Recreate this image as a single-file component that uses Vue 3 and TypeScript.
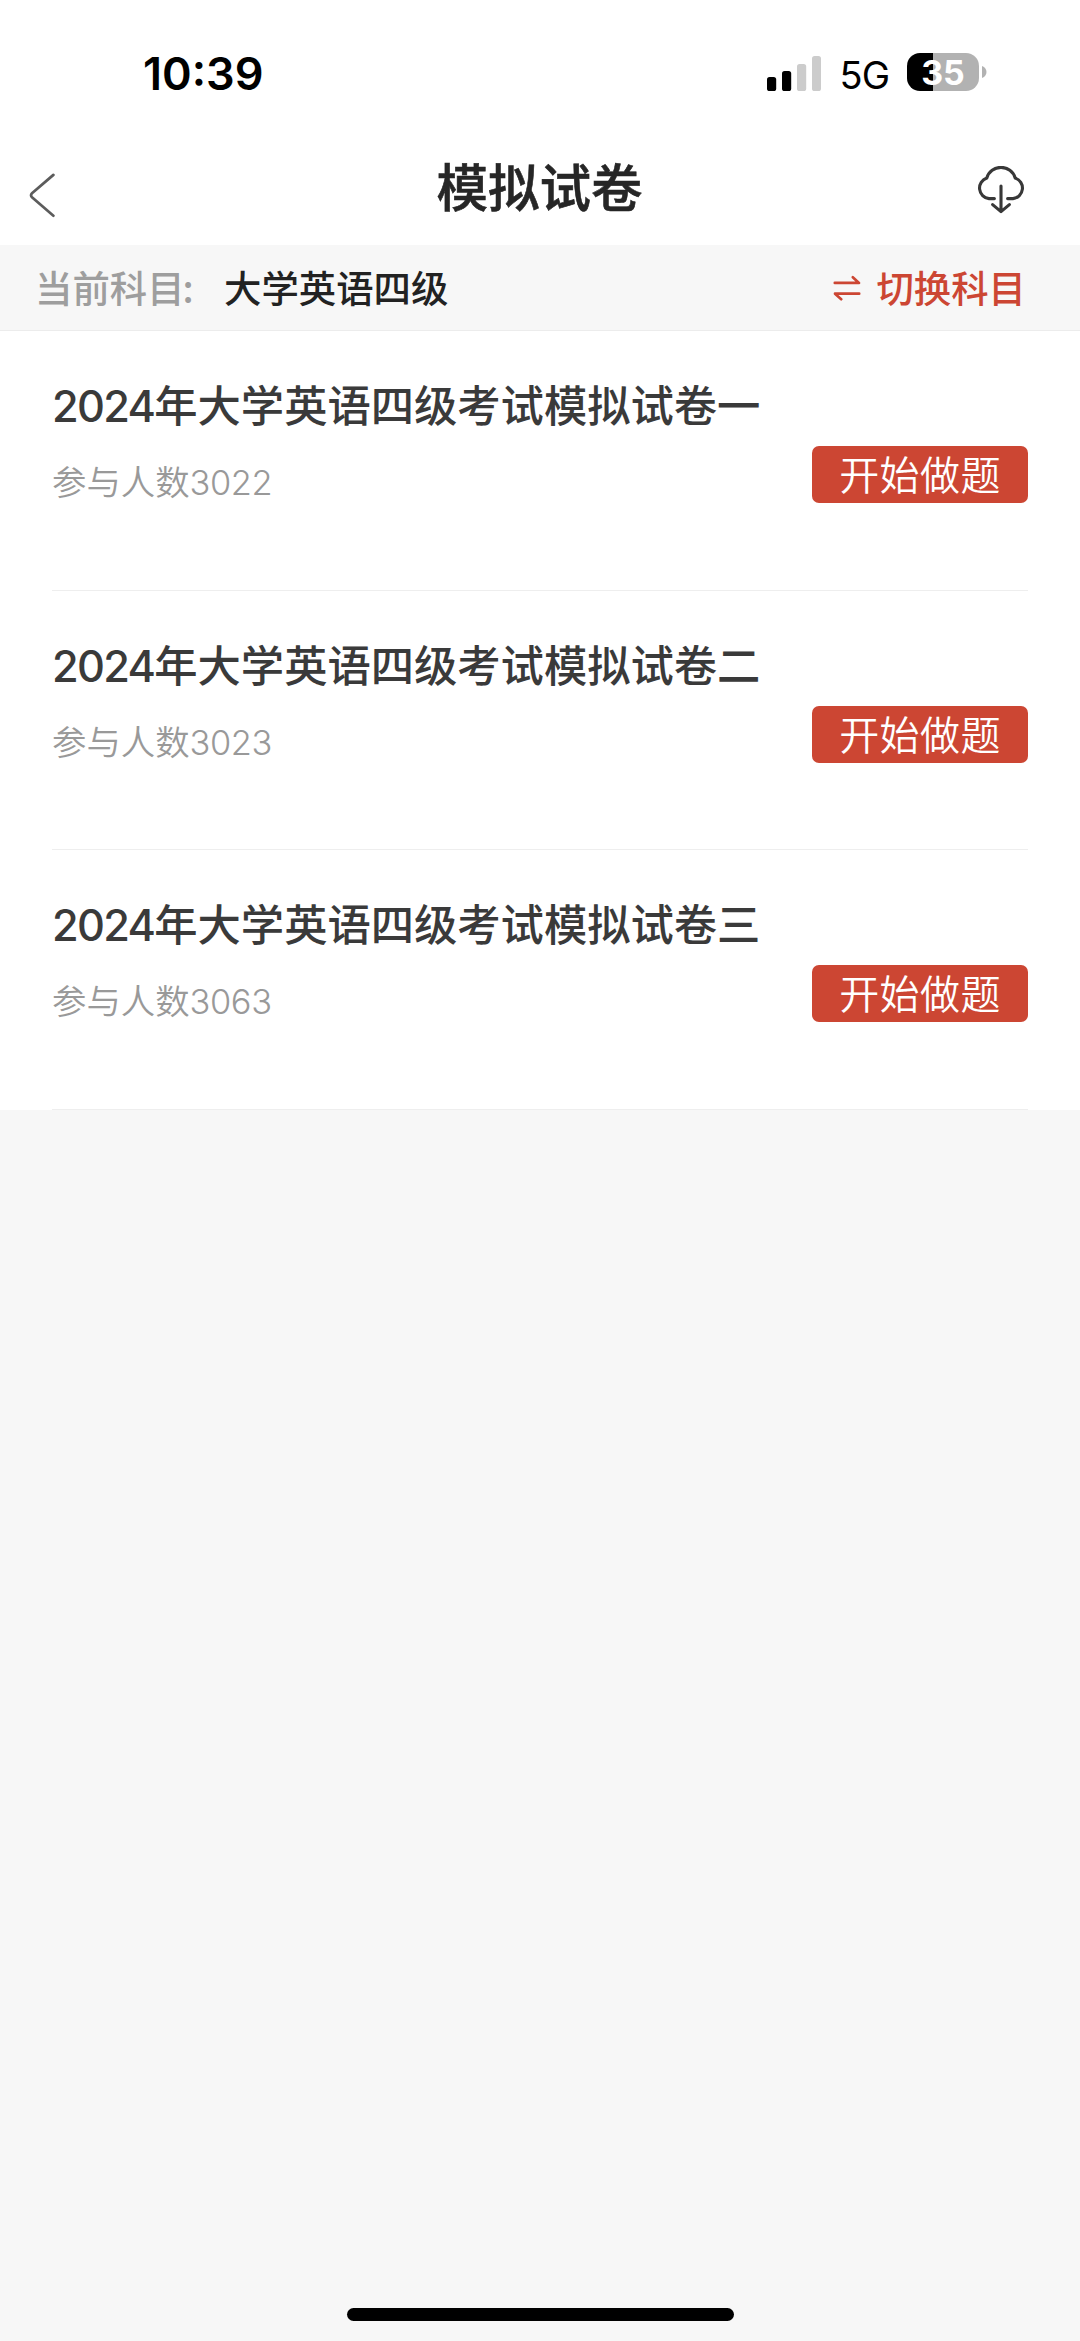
<script setup lang="ts">
interface Paper {
  year: string
  name: string
  count: number
}

const papers: Paper[] = [
  { year: '2024', name: '年大学英语四级考试模拟试卷一', count: 3022 },
  { year: '2024', name: '年大学英语四级考试模拟试卷二', count: 3023 },
  { year: '2024', name: '年大学英语四级考试模拟试卷三', count: 3063 },
]
</script>

<template>
  <div class="screen">
    <div class="status">
      <span class="time">10:39</span>
      <div class="indicators">
        <svg class="signal" width="54" height="36" viewBox="0 0 54 36">
          <rect x="0" y="21" width="9.2" height="14" rx="2.6" fill="#000" />
          <rect x="15" y="15" width="9.2" height="20" rx="2.6" fill="#000" />
          <rect x="30" y="8" width="9.2" height="27" rx="2.6" fill="#ccc" />
          <rect x="45" y="0" width="9" height="35" rx="2.6" fill="#ccc" />
        </svg>
        <span class="network">5G</span>
        <div class="battery">
          <span class="level">35</span>
          <svg class="nub" width="5" height="12" viewBox="0 0 5 12">
            <path d="M0 0C6 2 6 10 0 12Z" fill="#b2b2b2" />
          </svg>
        </div>
      </div>
    </div>

    <header class="nav">
      <svg class="back" width="26" height="46" viewBox="0 0 26 46">
        <path d="M24.4 2.9L3 21.2Q1 23.2 3 25.2L24.4 43.7" fill="none" stroke="#5c5c5c" stroke-width="2.7" stroke-linecap="round" />
      </svg>
      <h1 class="title">模拟试卷</h1>
      <svg class="cloud" width="50" height="48" viewBox="0 0 50 48">
        <g fill="none" stroke="#383838" stroke-width="3.1" stroke-linecap="round" stroke-linejoin="round">
          <path d="M18.4 32.6H13A10.6 10.6 0 0 1 10.8 12A14.8 14.8 0 0 1 39.2 12A10.6 10.6 0 0 1 37 32.6H31.6" />
          <path d="M25 20V45.6M16.6 38.6L25 45.6L33.4 38.6" />
        </g>
      </svg>
    </header>

    <div class="subject">
      <span class="label">当前科目<span class="colon">:</span></span>
      <span class="current">大学英语四级</span>
      <div class="switch">
        <svg width="28" height="26" viewBox="0 0 28 26">
          <g fill="none" stroke="#cc4633" stroke-width="2.7" stroke-linecap="round" stroke-linejoin="round">
            <path d="M1.8 7.9H26L19.8 2.2" />
            <path d="M26.2 18.7H2L8.2 24.2" />
          </g>
        </svg>
        <span>切换科目</span>
      </div>
    </div>

    <main class="list">
      <article v-for="paper in papers" :key="paper.name" class="item">
        <div class="info">
          <h2 class="name"><span class="num">{{ paper.year }}</span>{{ paper.name }}</h2>
          <p class="count">参与人数<span class="num">{{ paper.count }}</span></p>
        </div>
        <button class="start">开始做题</button>
      </article>
    </main>

    <div class="home"></div>
  </div>
</template>

<style>
body {
  margin: 0;
  background: #f7f7f7;
}
</style>

<style scoped>
.screen {
  display: flex;
  flex-direction: column;
  width: 1080px;
  height: 2341px;
  background: #f7f7f7;
  font-family: "Noto Sans CJK SC", sans-serif;
}
.status {
  display: flex;
  justify-content: space-between;
  box-sizing: border-box;
  height: 130px;
  padding: 44px 93px 0 143px;
  background: #fff;
  color: #000;
  font-family: Inter, sans-serif;
}
.time {
  height: 60px;
  font-size: 45px;
  font-weight: 600;
  line-height: 60px;
}
.indicators {
  display: flex;
  align-items: center;
  height: 58px;
}
.network {
  margin: 3px 0 0 19px;
  font-size: 38px;
  line-height: 50px;
  letter-spacing: -1px;
}
.battery {
  display: flex;
  align-items: center;
  gap: 3px;
  margin: -2px 0 0 18px;
}
.level {
  width: 72px;
  height: 38px;
  border-radius: 13px;
  background: linear-gradient(90deg, #000 26px, #b2b2b2 26px);
  color: #fff;
  font-size: 34px;
  font-weight: 700;
  line-height: 39px;
  text-align: center;
}
.signal {
  margin-top: 1px;
}
.nav {
  display: flex;
  justify-content: space-between;
  box-sizing: border-box;
  height: 115px;
  padding: 0 54px 0 29px;
  background: #fff;
}
.back {
  margin-top: 42px;
}
.title {
  margin: 17px 0 0 48px;
  height: 76px;
  color: #262626;
  font-size: 51.5px;
  font-weight: 500;
  line-height: 76px;
  -webkit-text-stroke: 0.6px #262626;
}
.cloud {
  margin-top: 36px;
}
.subject {
  display: flex;
  box-sizing: border-box;
  height: 86px;
  padding: 0 54px 0 35px;
  border-bottom: 1px solid #ececec;
  font-size: 37.4px;
  line-height: 85px;
}
.label {
  width: 189px;
  color: #9e9e9e;
  font-weight: 500;
}
.colon {
  margin-left: -2px;
}
.current {
  color: #222;
  font-weight: 500;
}
.switch {
  display: flex;
  align-items: center;
  gap: 15px;
  margin-left: auto;
  color: #cc4633;
  font-weight: 500;
}
.list {
  padding: 0 52px;
  background: #fff;
}
.item {
  display: flex;
  justify-content: space-between;
  box-sizing: border-box;
  height: 259.6px;
  border-bottom: 1.6px solid #eee;
}
.name {
  margin: 40px 0 0;
  height: 64px;
  color: #3a3a3a;
  font-size: 43.3px;
  font-weight: 500;
  line-height: 64px;
  white-space: nowrap;
}
.count {
  margin: 20px 0 0;
  height: 50px;
  color: #999;
  font-size: 34.4px;
  font-weight: 350;
  line-height: 50px;
}
.num {
  font-family: Inter, sans-serif;
  letter-spacing: -1.7px;
}
.count .num {
  letter-spacing: -0.4px;
}
.start {
  width: 216px;
  height: 57px;
  margin: 115px 0 0;
  padding: 0 0 2px;
  border: 0;
  border-radius: 7px;
  background: #cc4633;
  color: #fff;
  font-family: inherit;
  font-size: 40px;
  font-weight: 350;
  line-height: 55px;
  letter-spacing: 0.4px;
}
.home {
  width: 387px;
  height: 13px;
  margin: auto auto 20px;
  border-radius: 7px;
  background: #000;
}
</style>
